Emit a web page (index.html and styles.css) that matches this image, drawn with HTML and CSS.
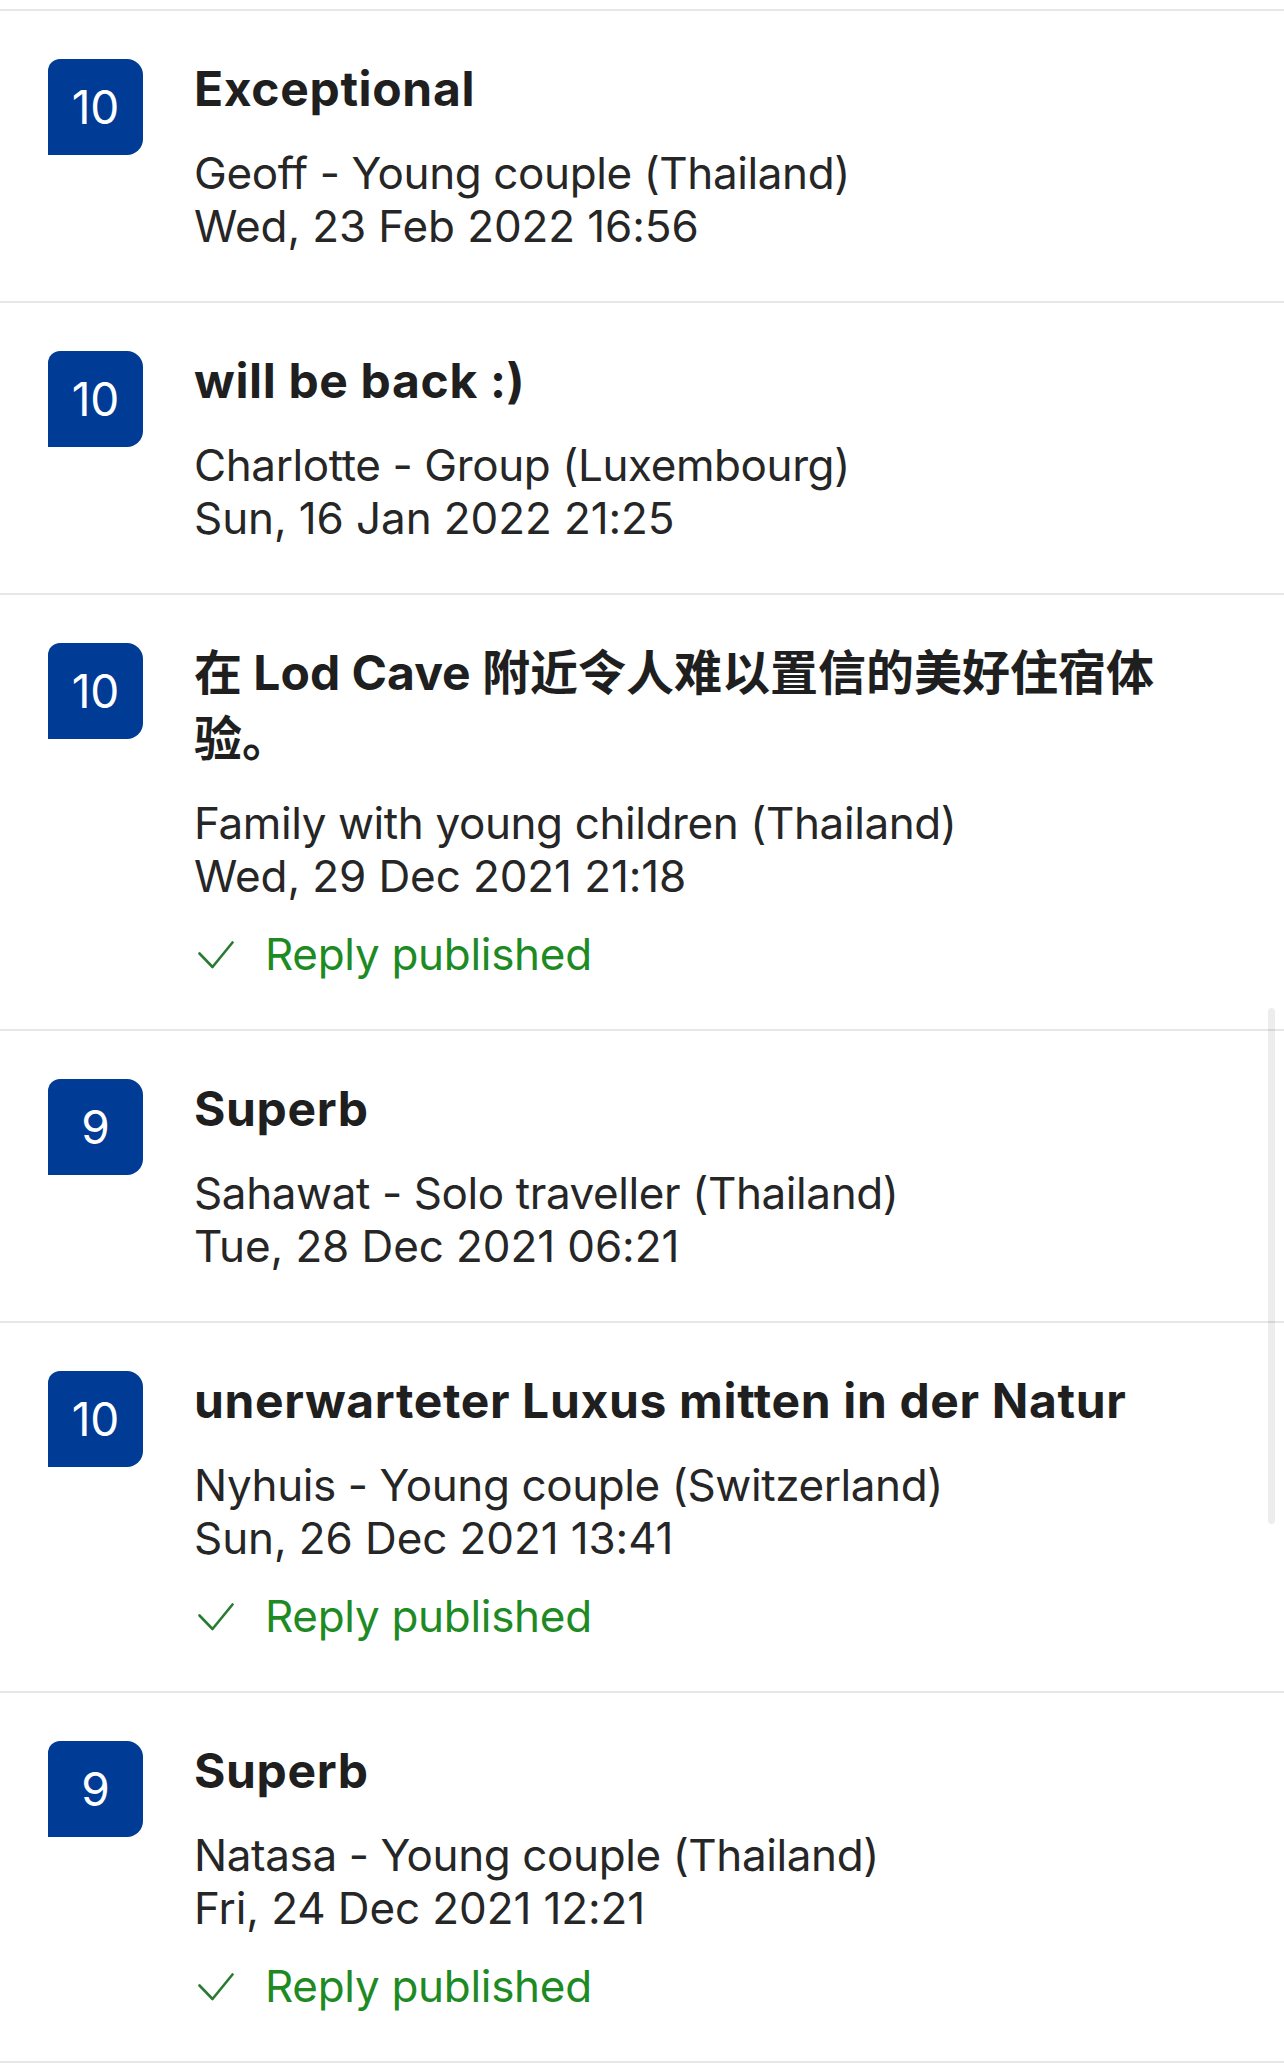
FILE: index.html
```html
<!DOCTYPE html>
<html lang="en">
<head>
<meta charset="utf-8">
<title>Reviews</title>
<link rel="stylesheet" href="styles.css">
</head>
<body>
<main class="reviews">
  <article class="review">
    <div class="score">10</div>
    <div class="body">
      <h2 class="title">Exceptional</h2>
      <p class="meta">Geoff - Young couple (Thailand)<br><span class="date">Wed, 23 Feb 2022 16:56</span></p>
    </div>
  </article>
  <article class="review">
    <div class="score">10</div>
    <div class="body">
      <h2 class="title">will be back :)</h2>
      <p class="meta">Charlotte - Group (Luxembourg)<br><span class="date">Sun, 16 Jan 2022 21:25</span></p>
    </div>
  </article>
  <article class="review">
    <div class="score">10</div>
    <div class="body">
      <h2 class="title" lang="zh-CN">在 Lod Cave 附近令人难以置信的美好住宿体验。</h2>
      <p class="meta">Family with young children (Thailand)<br><span class="date">Wed, 29 Dec 2021 21:18</span></p>
      <p class="reply"><svg class="check" width="36" height="28" viewBox="0 0 36 28"><path d="M1.5 12.5 L14.5 26 L34.5 1.5" fill="none" stroke="currentColor" stroke-width="2.6" stroke-linecap="round" stroke-linejoin="round"/></svg>Reply published</p>
    </div>
  </article>
  <article class="review">
    <div class="score">9</div>
    <div class="body">
      <h2 class="title">Superb</h2>
      <p class="meta">Sahawat - Solo traveller (Thailand)<br><span class="date">Tue, 28 Dec 2021 06:21</span></p>
    </div>
  </article>
  <article class="review">
    <div class="score">10</div>
    <div class="body">
      <h2 class="title">unerwarteter Luxus mitten in der Natur</h2>
      <p class="meta">Nyhuis - Young couple (Switzerland)<br><span class="date">Sun, 26 Dec 2021 13:41</span></p>
      <p class="reply"><svg class="check" width="36" height="28" viewBox="0 0 36 28"><path d="M1.5 12.5 L14.5 26 L34.5 1.5" fill="none" stroke="currentColor" stroke-width="2.6" stroke-linecap="round" stroke-linejoin="round"/></svg>Reply published</p>
    </div>
  </article>
  <article class="review">
    <div class="score">9</div>
    <div class="body">
      <h2 class="title">Superb</h2>
      <p class="meta">Natasa - Young couple (Thailand)<br><span class="date">Fri, 24 Dec 2021 12:21</span></p>
      <p class="reply"><svg class="check" width="36" height="28" viewBox="0 0 36 28"><path d="M1.5 12.5 L14.5 26 L34.5 1.5" fill="none" stroke="currentColor" stroke-width="2.6" stroke-linecap="round" stroke-linejoin="round"/></svg>Reply published</p>
    </div>
  </article>
</main>
<div class="scrollbar"></div>
</body>
</html>
```
FILE: styles.css
```css
html, body {
  margin: 0;
  padding: 0;
  background: #ffffff;
}

body {
  font-family: Inter, "Noto Sans CJK SC", "Liberation Sans", sans-serif;
  color: #262626;
  position: relative;
  min-height: 2067px;
  overflow: hidden;
}

.reviews {
  margin-top: 9px;
  border-top: 2px solid #e6e6e6;
}

.review {
  display: flex;
  align-items: flex-start;
  padding: 48px 0 48px 48px;
  border-bottom: 2px solid #e6e6e6;
}

.score {
  flex: none;
  width: 95px;
  height: 96px;
  display: flex;
  align-items: center;
  justify-content: center;
  background: #003b95;
  color: #ffffff;
  font-size: 46px;
  font-weight: 400;
  border-radius: 12px 16px 16px 0;
}

.body {
  margin-left: 51px;
  width: 986px;
}

.title {
  margin: -3px 0 0;
  font-size: 48px;
  line-height: 66px;
  font-weight: 700;
  letter-spacing: 0.65px;
  color: #1f1f1f;
}

.title:lang(zh-CN) {
  letter-spacing: 0;
}

.meta {
  margin: 25px 0 0;
  font-size: 44px;
  line-height: 53px;
  font-weight: 400;
  letter-spacing: -0.4px;
  color: #262626;
}

.date {
  letter-spacing: -0.1px;
}

.reply {
  margin: 25px 0 0;
  display: flex;
  align-items: center;
  font-size: 44px;
  line-height: 53px;
  letter-spacing: -0.3px;
  color: #1e8a24;
}

.check {
  flex: none;
  margin-left: 4px;
  margin-right: 31px;
  color: #2a7a33;
}

.scrollbar {
  position: absolute;
  left: 1268px;
  top: 1008px;
  width: 7px;
  height: 516px;
  border-radius: 4px;
  background: rgba(0, 0, 0, 0.07);
}
```
